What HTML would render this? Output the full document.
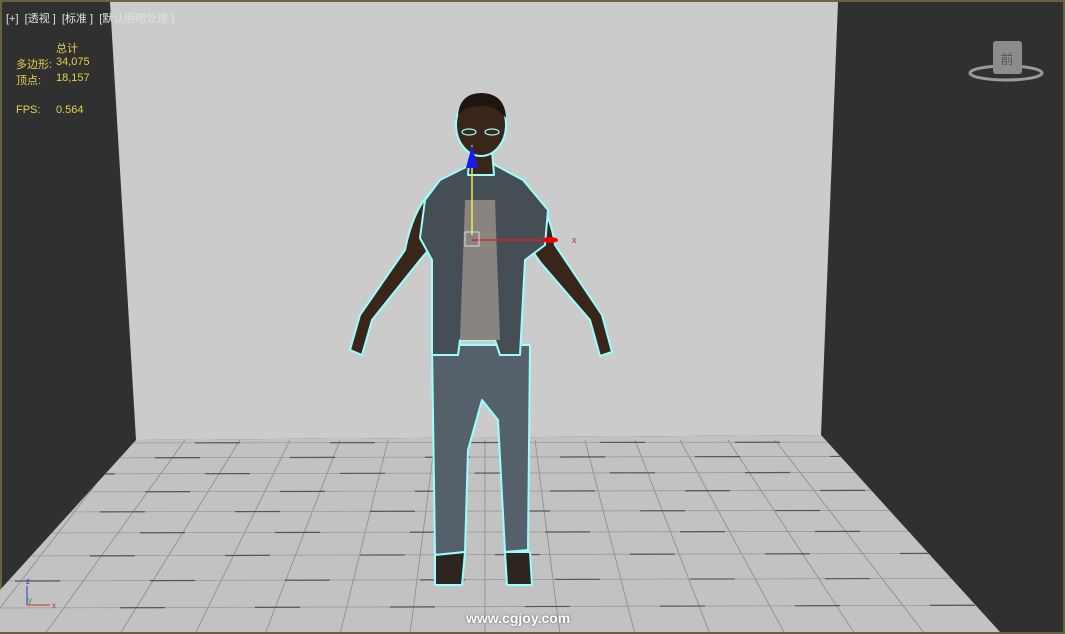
<!DOCTYPE html><html><head><meta charset="utf-8"><style>
html,body{margin:0;padding:0;background:#6d6240}
#v{position:absolute;left:0;top:0;width:1065px;height:634px;overflow:hidden}
.t{position:absolute;font-family:"Liberation Sans","Noto Sans CJK SC",sans-serif;font-size:11px;color:#e0e0e0;white-space:nowrap}
.y{color:#e8d048}
</style></head><body><div id="v">
<svg width="1065" height="634" style="position:absolute;left:0;top:0">
<defs><clipPath id="fl"><polygon points="136,440 821,435 1000,632 0,632 0,590"/></clipPath></defs>
<rect x="0" y="0" width="1065" height="634" fill="#6d6240"/>
<rect x="2" y="2" width="1061" height="630" fill="#303030"/>
<polygon points="110,2 838,2 821,435 136,440" fill="#cbcbcb"/>
<polygon points="136,440 821,435 1000,632 0,632 0,590" fill="#c2c2c2"/>
<g clip-path="url(#fl)" stroke="#8a8a8a" stroke-width="0.8">
<line x1="80" y1="440" x2="-100" y2="634"/><line x1="130" y1="440" x2="-20" y2="634"/>
<line x1="185" y1="440" x2="45" y2="634"/><line x1="240" y1="440" x2="120" y2="634"/>
<line x1="290" y1="440" x2="195" y2="634"/><line x1="340" y1="440" x2="265" y2="634"/>
<line x1="388" y1="440" x2="340" y2="634"/><line x1="435" y1="440" x2="410" y2="634"/>
<line x1="485" y1="440" x2="485" y2="634"/><line x1="535" y1="440" x2="560" y2="634"/>
<line x1="585" y1="440" x2="635" y2="634"/><line x1="635" y1="440" x2="710" y2="634"/>
<line x1="680" y1="440" x2="785" y2="634"/><line x1="728" y1="440" x2="855" y2="634"/>
<line x1="775" y1="440" x2="925" y2="634"/>
</g>
<g clip-path="url(#fl)" stroke="#999" stroke-width="0.8">
<line x1="0" y1="443" x2="1065" y2="442"/><line x1="0" y1="458" x2="1065" y2="456"/>
<line x1="0" y1="474" x2="1065" y2="472"/><line x1="0" y1="492" x2="1065" y2="490"/>
<line x1="0" y1="512" x2="1065" y2="510"/><line x1="0" y1="533" x2="1065" y2="531"/>
<line x1="0" y1="556" x2="1065" y2="553"/><line x1="0" y1="581" x2="1065" y2="578"/>
<line x1="0" y1="608" x2="1065" y2="605"/>
</g>
<g clip-path="url(#fl)" stroke="#555" stroke-width="1.2" stroke-dasharray="45,90">
<line x1="0" y1="443" x2="1065" y2="442" stroke-dashoffset="-60"/><line x1="20" y1="458" x2="1065" y2="456"/>
<line x1="40" y1="474" x2="1065" y2="472" stroke-dashoffset="-30"/><line x1="10" y1="492" x2="1065" y2="490"/>
<line x1="30" y1="512" x2="1065" y2="510" stroke-dashoffset="-70"/><line x1="5" y1="533" x2="1065" y2="531"/>
<line x1="50" y1="556" x2="1065" y2="553" stroke-dashoffset="-40"/><line x1="15" y1="581" x2="1065" y2="578"/>
<line x1="40" y1="608" x2="1065" y2="605" stroke-dashoffset="-80"/>
</g>
<!-- character -->
<g stroke="#9ff" stroke-width="2" stroke-linejoin="round">
<path d="M440,185 Q415,200 405,250 L360,315 L350,350 L362,355 L372,320 L420,260 L437,240 Z" fill="#3a2619"/>
<path d="M522,185 Q548,200 555,245 L602,315 L612,352 L600,356 L590,320 L540,262 L525,240 Z" fill="#3a2619"/>
<path d="M432,345 L530,345 L528,550 L505,552 L498,420 L482,400 L468,450 L465,552 L435,555 Z" fill="#55606a"/>
<path d="M435,555 L465,552 L462,585 L435,585 Z M505,552 L530,552 L532,585 L507,585 Z" fill="#2d2620"/>
<path d="M440,180 L470,165 L495,165 L523,180 L548,210 L545,245 L525,260 L520,355 L500,355 L495,340 L460,340 L458,355 L432,355 L432,260 L420,238 L425,200 Z" fill="#454d55"/>
<path d="M465,200 L495,200 L500,340 L460,340 Z" fill="#8a8480" stroke="none"/>
<path d="M470,150 L492,150 L494,175 L468,175 Z" fill="#3a2619"/>
<ellipse cx="481" cy="125" rx="25" ry="31" fill="#3a2619"/>
<path d="M458,115 Q460,93 482,93 Q505,94 506,118 Q495,105 481,106 Q466,106 458,115 Z" fill="#1e1510" stroke="none"/>
</g>
<g fill="none" stroke="#9ff" stroke-width="1.2"><ellipse cx="469" cy="132" rx="7" ry="3"/><ellipse cx="492" cy="132" rx="7" ry="3"/><line x1="476" y1="156" x2="486" y2="156"/></g>
<line x1="472" y1="145" x2="472" y2="235" stroke="#ee4" stroke-width="1.5"/>
<polygon points="472,145 466,168 478,168" fill="#1a1aee"/>
<line x1="472" y1="240" x2="545" y2="240" stroke="#d22" stroke-width="1.5"/>
<ellipse cx="550" cy="240" rx="8" ry="3" fill="#e00"/>
<text x="572" y="243" font-size="9" fill="#a33" font-family="Liberation Sans">x</text>
<rect x="465" y="232" width="14" height="14" fill="none" stroke="#ddd" stroke-width="1"/>
<!-- viewcube -->
<ellipse cx="1006" cy="73" rx="36" ry="7" fill="none" stroke="#9a9a9a" stroke-width="3"/>
<rect x="993" y="41" width="29" height="33" rx="3" fill="#8c8c8c"/>
<text x="1007" y="64" font-size="13" fill="#555" text-anchor="middle" font-family="Noto Sans CJK SC,sans-serif">前</text>
<!-- axis tripod -->
<line x1="27" y1="586" x2="27" y2="605" stroke="#33c" stroke-width="1"/>
<line x1="27" y1="605" x2="50" y2="605" stroke="#c33" stroke-width="1"/>
<text x="26" y="584" font-size="8" fill="#33c" font-family="Liberation Sans">z</text>
<text x="28" y="603" font-size="8" fill="#393" font-family="Liberation Sans">y</text>
<text x="52" y="608" font-size="8" fill="#c33" font-family="Liberation Sans">x</text>
</svg>
<div class="t" style="left:6px;top:10px">[+]&nbsp; [透视 ]&nbsp; [标准 ]&nbsp; [默认明暗处理 ]</div>
<div class="t y" style="left:56px;top:40px">总计</div>
<div class="t y" style="left:16px;top:56px">多边形:</div><div class="t y" style="left:56px;top:56px">34,075</div>
<div class="t y" style="left:16px;top:72px">顶点:</div><div class="t y" style="left:56px;top:72px">18,157</div>
<div class="t y" style="left:16px;top:104px">FPS:</div><div class="t y" style="left:56px;top:104px">0.564</div>
<div class="t" style="left:466px;top:610px;font-size:14px;font-weight:bold;color:#fff;text-shadow:0 0 2px #555">www.cgjoy.com</div>
</div></body></html>
